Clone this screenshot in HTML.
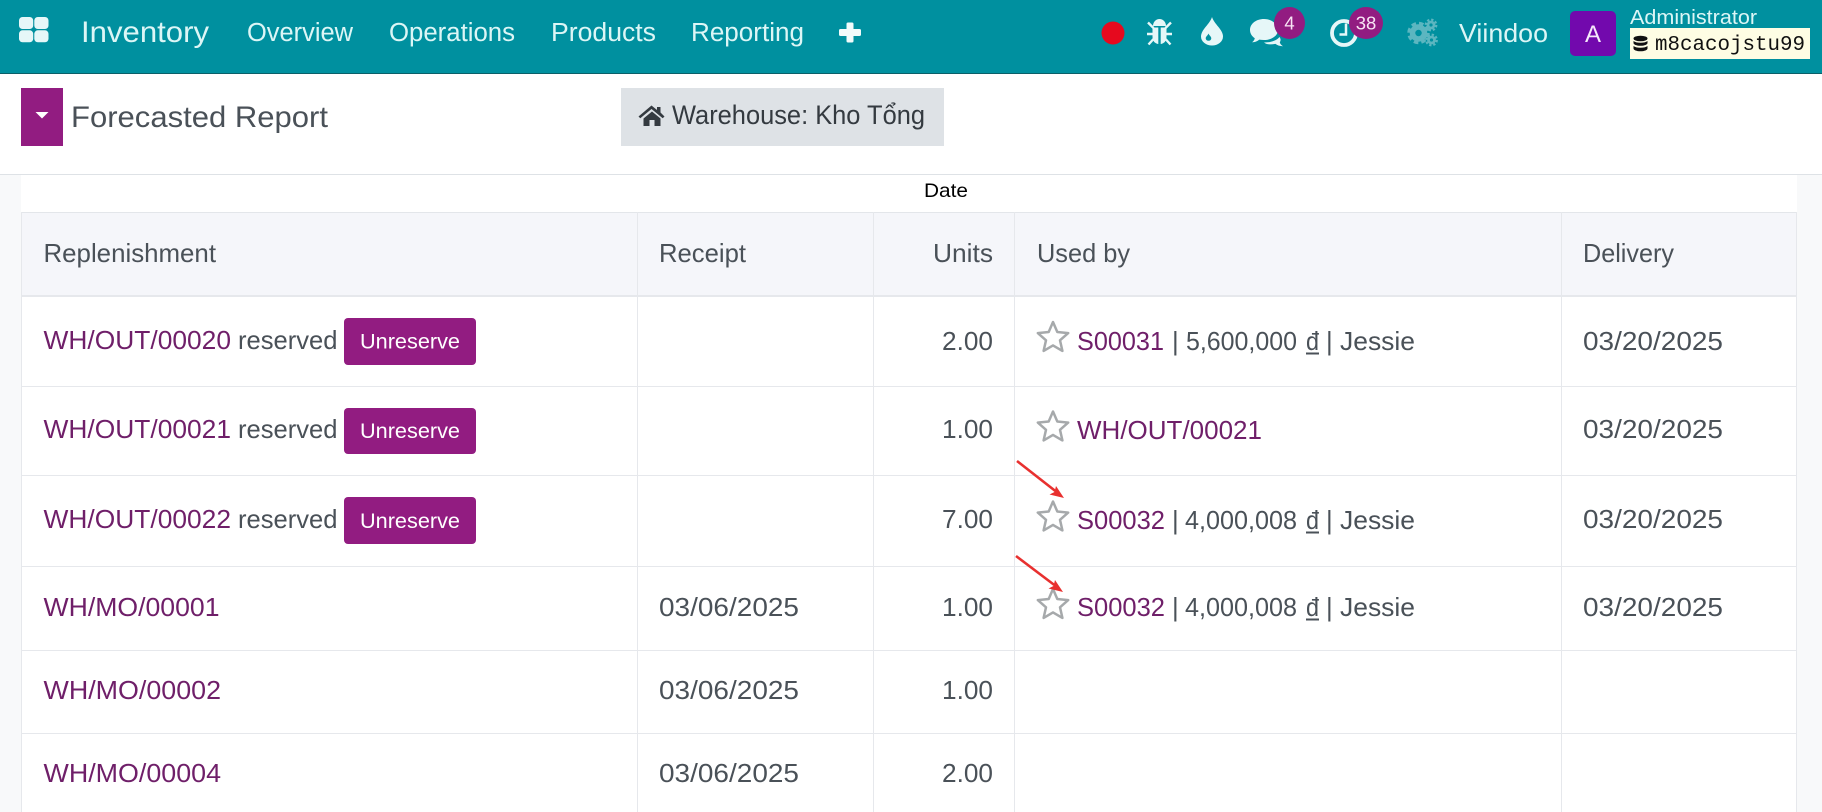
<!DOCTYPE html>
<html><head><meta charset="utf-8"><title>Forecasted Report</title>
<style>
html,body{margin:0;padding:0;width:1822px;height:812px;overflow:hidden;background:#fff}
svg{display:block}
text{font-family:"Liberation Sans","Noto Sans CJK SC",sans-serif;white-space:pre}
.t{font-size:25.8px;fill:#4a5158}
.l{font-size:25.8px;fill:#6f1f69}
.h{font-size:25.8px;fill:#4a5158}
.n{fill:#dcf6f6}
.u{font-size:21.5px;fill:#fff}
</style></head><body>
<svg width="1822" height="812" viewBox="0 0 1822 812" xmlns="http://www.w3.org/2000/svg">
<rect width="1822" height="812" fill="#fff"/>
<!-- navbar -->
<rect width="1822" height="73" fill="#00909f"/>
<rect y="73" width="1822" height="1" fill="#0b5f68"/>
<g fill="#e6f7f8">
<rect x="19" y="17" width="14.200" height="12" rx="3.500"/><rect x="34.300" y="17" width="14.200" height="12" rx="3.500"/>
<rect x="19" y="30.300" width="14.200" height="12" rx="3.500"/><rect x="34.300" y="30.300" width="14.200" height="12" rx="3.500"/>
</g>
<text class="n" x="81" y="42" font-size="29.500" textLength="128" lengthAdjust="spacingAndGlyphs">Inventory</text>
<text class="n" x="247" y="41" font-size="25.500" textLength="106" lengthAdjust="spacingAndGlyphs">Overview</text>
<text class="n" x="389" y="41" font-size="25.500" textLength="126" lengthAdjust="spacingAndGlyphs">Operations</text>
<text class="n" x="551" y="41" font-size="25.500" textLength="105" lengthAdjust="spacingAndGlyphs">Products</text>
<text class="n" x="691" y="41" font-size="25.500" textLength="113" lengthAdjust="spacingAndGlyphs">Reporting</text>
<rect x="846.500" y="22.500" width="7" height="20" rx="1.500" fill="#f2fbfb"/>
<rect x="839" y="29" width="22" height="7" rx="1.500" fill="#f2fbfb"/>
<!-- red dot -->
<circle cx="1113" cy="33" r="11.500" fill="#e6091e"/>
<!-- bug -->
<g fill="#e6f7f8">
<path d="M1153 26c0-4 3-7 6.500-7s6.500 3 6.500 7z"/>
<path d="M1152.500 27.500h5.800V44c-3.800-.5-5.800-3.500-5.800-7.500z"/><path d="M1160.700 27.500h5.800v9c0 4-2 7-5.800 7.500z"/>
</g>
<path d="M1148 22.500l5.500 5.500M1171 22.500l-5.500 5.500M1147 34h6M1172 34h-6M1148.500 44.500l5-5.500M1170.500 44.500l-5-5.500" stroke="#e6f7f8" stroke-width="2.400" fill="none"/>
<!-- drop -->
<path d="M1212 17C1214 24 1223 29.500 1223 36.500A11 9 0 0 1 1201 36.500C1201 29.500 1210 24 1212 17z" fill="#e6f7f8"/>
<path d="M1208.500 33.500c.6 1.800 2.800 3 2.800 4.800a2.800 2.500 0 0 1-5.600 0c0-1.800 2.200-3 2.800-4.800z" fill="#00909f"/>
<!-- chat -->
<path d="M1264 19c-8 0-14 4.800-14 11 0 3.500 2 6.300 4.800 8.300-.4 1.700-1.300 3-2.800 4 2.800 0 5.300-1 7.300-2.700 1.500.3 3 .4 4.700.4 8 0 14-4.500 14-10s-6-11-14-11z" fill="#e6f7f8"/>
<path d="M1264 42.500c6.500 0 12-1.500 15.500-5.500 1.500 2 1.300 3.800.3 5.200.3 1.500 1.500 3 3.200 4-3 0-5.700-.8-7.500-2.300-5 .8-8.800 .8-11.500-1.400z" fill="#e6f7f8"/>
<!-- badge 4 -->
<ellipse cx="1289.500" cy="23" rx="15.500" ry="16" fill="#921c81"/>
<text x="1289.500" y="29.500" font-size="18.500" fill="#f8e4f4" text-anchor="middle">4</text>
<!-- clock -->
<circle cx="1344" cy="33" r="12" fill="none" stroke="#e6f7f8" stroke-width="3.800"/>
<path d="M1346 23.500V34.500h-6.500" fill="none" stroke="#e6f7f8" stroke-width="2.500"/>
<!-- badge 38 -->
<ellipse cx="1366" cy="23" rx="17" ry="16" fill="#921c81"/>
<text x="1366" y="29.500" font-size="18.500" fill="#f8e4f4" text-anchor="middle">38</text>
<!-- gears -->
<g fill="none" stroke="#5cb6c0">
<circle cx="1418.500" cy="33" r="6" stroke-width="5.500"/>
<circle cx="1418.500" cy="33" r="9.500" stroke-width="3.500" stroke-dasharray="4.500 3"/>
<circle cx="1431" cy="25" r="3" stroke-width="2.800"/>
<circle cx="1431" cy="25" r="5.300" stroke-width="2.200" stroke-dasharray="2.300 1.860"/>
<circle cx="1431.500" cy="40" r="3" stroke-width="2.800"/>
<circle cx="1431.500" cy="40" r="5.300" stroke-width="2.200" stroke-dasharray="2.300 1.860"/>
</g>
<text class="n" x="1459" y="42" font-size="26" textLength="89" lengthAdjust="spacingAndGlyphs">Viindoo</text>
<rect x="1570" y="11" width="46" height="45" rx="5" fill="#7209ad"/>
<text x="1593" y="42" font-size="24" fill="#f5e8fb" text-anchor="middle">A</text>
<text class="n" x="1630" y="24" font-size="20.500" textLength="127" lengthAdjust="spacingAndGlyphs">Administrator</text>
<rect x="1630" y="28" width="180" height="31" fill="#fefde4"/>
<g fill="#111">
<ellipse cx="1640.500" cy="38.500" rx="7" ry="2.800"/>
<path d="M1633.500 41v2c0 1.500 3 2.800 7 2.800s7-1.300 7-2.800v-2c-1.500 1.200-4 1.800-7 1.800s-5.500-.6-7-1.800z"/>
<path d="M1633.500 46v2.500c0 1.500 3 2.800 7 2.800s7-1.300 7-2.800V46c-1.500 1.200-4 1.800-7 1.800s-5.500-.6-7-1.800z"/>
</g>
<text x="1655" y="50" font-size="21" fill="#111" style="font-family:'Liberation Mono',monospace" textLength="150" lengthAdjust="spacingAndGlyphs">m8cacojstu99</text>
<!-- control panel -->
<rect x="21" y="88" width="42" height="58" fill="#921c81"/>
<path d="M35.500 112h13l-6.500 6.500z" fill="#fff"/>
<text x="71" y="127" font-size="30" fill="#4a5158" textLength="257" lengthAdjust="spacingAndGlyphs">Forecasted Report</text>
<rect x="621" y="88" width="323" height="58" fill="#dee2e6"/>
<path d="M657 106.500h3.500v5.500l4 4-1.800 1.800-11.200-9.300-11.200 9.300-1.800-1.800 13-11 5.500 4.500z" fill="#343a40" transform="translate(0 .5)"/>
<path d="M643.500 118.500l8.500-7 8.500 7v7.500h-6v-6h-5v6h-6z" fill="#343a40"/>
<text x="672" y="124" font-size="26.500" fill="#343a40" textLength="253" lengthAdjust="spacingAndGlyphs">Warehouse: Kho Tổng</text>
<rect y="174" width="1822" height="1" fill="#dee2e6"/>
<!-- page background -->
<rect y="175" width="21" height="637" fill="#f8f9fa"/>
<rect x="1797" y="175" width="25" height="637" fill="#f8f9fa"/>
<text x="924" y="197" font-size="19.500" fill="#000" textLength="44" lengthAdjust="spacingAndGlyphs">Date</text>
<!-- table -->
<rect x="21" y="212" width="1776" height="84" fill="#f5f6fa"/>
<rect x="21" y="212" width="1776" height="1" fill="#e3e6ea"/>
<rect x="21" y="295" width="1776" height="2" fill="#e6e8ec"/>
<g fill="#e6e8ec">
<rect x="21" y="386" width="1776" height="1"/><rect x="21" y="475" width="1776" height="1"/>
<rect x="21" y="566" width="1776" height="1"/><rect x="21" y="650" width="1776" height="1"/><rect x="21" y="733" width="1776" height="1"/>
<rect x="21" y="212" width="1" height="600"/><rect x="637" y="212" width="1" height="600"/><rect x="873" y="212" width="1" height="600"/>
<rect x="1014" y="212" width="1" height="600"/><rect x="1561" y="212" width="1" height="600"/><rect x="1796" y="212" width="1" height="600"/>
</g>
<!-- header -->
<text class="h" x="43.500" y="262" textLength="172.500" lengthAdjust="spacingAndGlyphs">Replenishment</text>
<text class="h" x="659" y="262" textLength="87" lengthAdjust="spacingAndGlyphs">Receipt</text>
<text class="h" x="933" y="262" textLength="60" lengthAdjust="spacingAndGlyphs">Units</text>
<text class="h" x="1037" y="262" textLength="93" lengthAdjust="spacingAndGlyphs">Used by</text>
<text class="h" x="1583" y="262" textLength="91" lengthAdjust="spacingAndGlyphs">Delivery</text>
<!-- col 1 -->
<text class="l" x="43.500" y="349" textLength="187.500" lengthAdjust="spacingAndGlyphs">WH/OUT/00020</text>
<text class="t" x="238" y="349" textLength="99.500" lengthAdjust="spacingAndGlyphs">reserved</text>
<rect x="344" y="318" width="132" height="47" rx="4" fill="#921c81"/>
<text class="u" x="360" y="348.500" textLength="100" lengthAdjust="spacingAndGlyphs">Unreserve</text>
<text class="l" x="43.500" y="438" textLength="187.500" lengthAdjust="spacingAndGlyphs">WH/OUT/00021</text>
<text class="t" x="238" y="438" textLength="99.500" lengthAdjust="spacingAndGlyphs">reserved</text>
<rect x="344" y="408" width="132" height="46" rx="4" fill="#921c81"/>
<text class="u" x="360" y="438" textLength="100" lengthAdjust="spacingAndGlyphs">Unreserve</text>
<text class="l" x="43.500" y="528" textLength="187.500" lengthAdjust="spacingAndGlyphs">WH/OUT/00022</text>
<text class="t" x="238" y="528" textLength="99.500" lengthAdjust="spacingAndGlyphs">reserved</text>
<rect x="344" y="497" width="132" height="47" rx="4" fill="#921c81"/>
<text class="u" x="360" y="528" textLength="100" lengthAdjust="spacingAndGlyphs">Unreserve</text>
<text class="l" x="43.500" y="616" textLength="176" lengthAdjust="spacingAndGlyphs">WH/MO/00001</text>
<text class="l" x="43.500" y="699" textLength="177.500" lengthAdjust="spacingAndGlyphs">WH/MO/00002</text>
<text class="l" x="43.500" y="782" textLength="177.500" lengthAdjust="spacingAndGlyphs">WH/MO/00004</text>
<!-- receipt -->
<text class="t" x="659" y="616" textLength="140" lengthAdjust="spacingAndGlyphs">03/06/2025</text>
<text class="t" x="659" y="699" textLength="140" lengthAdjust="spacingAndGlyphs">03/06/2025</text>
<text class="t" x="659" y="782" textLength="140" lengthAdjust="spacingAndGlyphs">03/06/2025</text>
<!-- units -->
<text class="t" x="942" y="350" textLength="51" lengthAdjust="spacingAndGlyphs">2.00</text>
<text class="t" x="942" y="438" textLength="51" lengthAdjust="spacingAndGlyphs">1.00</text>
<text class="t" x="942" y="528" textLength="51" lengthAdjust="spacingAndGlyphs">7.00</text>
<text class="t" x="942" y="616" textLength="51" lengthAdjust="spacingAndGlyphs">1.00</text>
<text class="t" x="942" y="699" textLength="51" lengthAdjust="spacingAndGlyphs">1.00</text>
<text class="t" x="942" y="782" textLength="51" lengthAdjust="spacingAndGlyphs">2.00</text>
<!-- stars -->
<g fill="none" stroke="#a6a9ab" stroke-width="2.500" stroke-linejoin="round">
<polygon transform="translate(1037 320)" points="16,2 20.300,12 31.200,13.100 23,20.300 25.400,30.900 16,25.400 6.600,30.900 9,20.300 0.800,13.100 11.700,12"/>
<polygon transform="translate(1037 409.500)" points="16,2 20.300,12 31.200,13.100 23,20.300 25.400,30.900 16,25.400 6.600,30.900 9,20.300 0.800,13.100 11.700,12"/>
<polygon transform="translate(1037 499.500)" points="16,2 20.300,12 31.200,13.100 23,20.300 25.400,30.900 16,25.400 6.600,30.900 9,20.300 0.800,13.100 11.700,12"/>
<polygon transform="translate(1037 587)" points="16,2 20.300,12 31.200,13.100 23,20.300 25.400,30.900 16,25.400 6.600,30.900 9,20.300 0.800,13.100 11.700,12"/>
</g>
<!-- used by -->
<text class="l" x="1077" y="350" textLength="87" lengthAdjust="spacingAndGlyphs">S00031</text>
<text class="t" x="1172" y="350">|</text>
<text class="t" x="1186" y="350" textLength="111" lengthAdjust="spacingAndGlyphs">5,600,000</text>
<text class="t" x="1306" y="350" textLength="13" lengthAdjust="spacingAndGlyphs">đ</text><rect x="1306" y="352.500" width="13" height="2" fill="#4a5158"/>
<text class="t" x="1326" y="350">|</text>
<text class="t" x="1340" y="350" textLength="75" lengthAdjust="spacingAndGlyphs">Jessie</text>

<text class="l" x="1077" y="439" textLength="185" lengthAdjust="spacingAndGlyphs">WH/OUT/00021</text>

<text class="l" x="1077" y="529" textLength="88" lengthAdjust="spacingAndGlyphs">S00032</text>
<text class="t" x="1172" y="529">|</text>
<text class="t" x="1185" y="529" textLength="112" lengthAdjust="spacingAndGlyphs">4,000,008</text>
<text class="t" x="1306" y="529" textLength="13" lengthAdjust="spacingAndGlyphs">đ</text><rect x="1306" y="531.500" width="13" height="2" fill="#4a5158"/>
<text class="t" x="1326" y="529">|</text>
<text class="t" x="1340" y="529" textLength="75" lengthAdjust="spacingAndGlyphs">Jessie</text>

<text class="l" x="1077" y="616" textLength="88" lengthAdjust="spacingAndGlyphs">S00032</text>
<text class="t" x="1172" y="616">|</text>
<text class="t" x="1185" y="616" textLength="112" lengthAdjust="spacingAndGlyphs">4,000,008</text>
<text class="t" x="1306" y="616" textLength="13" lengthAdjust="spacingAndGlyphs">đ</text><rect x="1306" y="618.500" width="13" height="2" fill="#4a5158"/>
<text class="t" x="1326" y="616">|</text>
<text class="t" x="1340" y="616" textLength="75" lengthAdjust="spacingAndGlyphs">Jessie</text>
<!-- delivery -->
<text class="t" x="1583" y="350" textLength="140" lengthAdjust="spacingAndGlyphs">03/20/2025</text>
<text class="t" x="1583" y="438" textLength="140" lengthAdjust="spacingAndGlyphs">03/20/2025</text>
<text class="t" x="1583" y="528" textLength="140" lengthAdjust="spacingAndGlyphs">03/20/2025</text>
<text class="t" x="1583" y="616" textLength="140" lengthAdjust="spacingAndGlyphs">03/20/2025</text>
<!-- arrows -->
<path d="M1017 461L1056 491.500" stroke="#e8302f" stroke-width="2.600" fill="none"/>
<path d="M1064 498l-14.500-3.500 5-2.500 1.500-6z" fill="#e8302f"/>
<path d="M1016 556L1055 585.500" stroke="#e8302f" stroke-width="2.600" fill="none"/>
<path d="M1063 592l-14.500-3.500 5-2.500 1.500-6z" fill="#e8302f"/>
</svg>
</body></html>
